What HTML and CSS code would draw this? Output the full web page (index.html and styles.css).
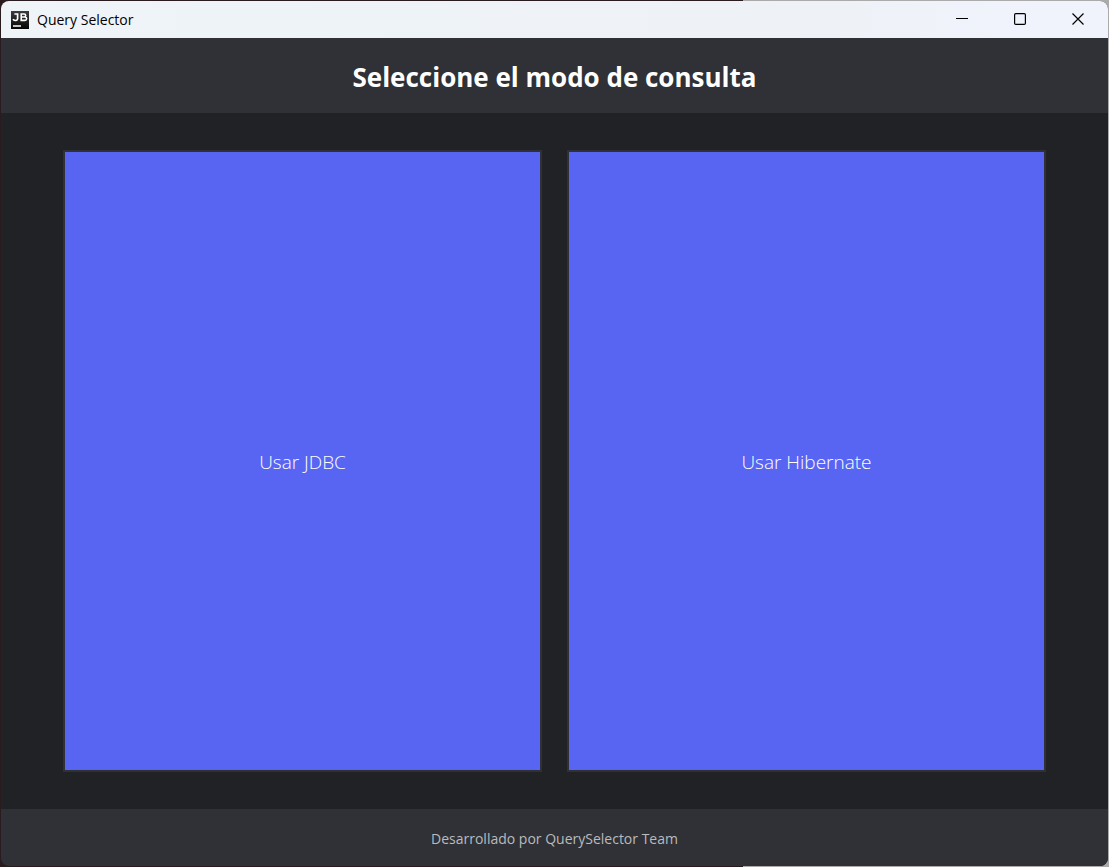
FILE: index.html
```html
<!DOCTYPE html>
<html lang="es">
<head>
<meta charset="utf-8">
<title>Query Selector</title>
<link rel="stylesheet" href="styles.css">
</head>
<body>
<div class="desktop">
  <div class="window">
    <div class="titlebar">
      <svg class="app-icon" viewBox="0 0 18 18" aria-hidden="true">
        <defs><linearGradient id="g" x1="0" y1="0" x2="0" y2="1"><stop offset="0" stop-color="#3c3c3e"/><stop offset="1" stop-color="#050505"/></linearGradient></defs>
        <rect width="18" height="18" fill="url(#g)"/>
        <path d="M3.4 3H7M6.6 2.2V7.6a1.8 1.8 0 0 1-1.9 1.9Q3 9.5 2 8.2" fill="none" stroke="#fff" stroke-width="1.7"/>
        <path d="M10.2 2.2V10.2M9.8 3h3.4a1.5 1.5 0 0 1 0 3H10M13.2 6h.7a1.7 1.7 0 0 1 0 3.4H9.8" fill="none" stroke="#fff" stroke-width="1.6"/>
        <path d="M2 15h8" stroke="#fff" stroke-width="1.4"/>
      </svg>
      <span class="caption">Query Selector</span>
      <div class="controls">
        <button class="control" type="button" aria-label="Minimizar"><svg viewBox="0 0 12 12"><path d="M0 5.5h12"/></svg></button>
        <button class="control" type="button" aria-label="Maximizar"><svg viewBox="0 0 12 12"><rect x=".6" y=".6" width="10.8" height="10.8" rx="1.2"/></svg></button>
        <button class="control" type="button" aria-label="Cerrar"><svg viewBox="0 0 12 12"><path d="M.5 .5l11 11M11.5 .5l-11 11"/></svg></button>
      </div>
    </div>
    <header class="header"><h1 class="heading">Seleccione el modo de consulta</h1></header>
    <main class="modes">
      <button class="mode" type="button">Usar JDBC</button>
      <button class="mode" type="button">Usar Hibernate</button>
    </main>
    <footer class="footer">Desarrollado por QuerySelector Team</footer>
  </div>
</div>
</body>
</html>
```

FILE: styles.css
```css
* { box-sizing: border-box; }

body {
  margin: 0;
  font-family: "Open Sans", "Noto Sans", sans-serif;
}

.desktop {
  display: flex;
  min-height: 100vh;
  padding: 1px;
  background: linear-gradient(90deg, #2a1c1e 0 67%, #ababab 67%);
}

.window {
  flex: 1;
  display: flex;
  flex-direction: column;
  overflow: hidden;
  border-radius: 8px;
  background: #202225;
}

.titlebar {
  display: flex;
  align-items: center;
  height: 37px;
  padding-left: 10px;
  gap: 8px;
  background: linear-gradient(90deg, #eff4f9, #eef2f7 75%, #f0f3fb 90%);
  color: #000;
}

.app-icon {
  width: 18px;
  height: 18px;
}

.caption {
  font-size: 14px;
  line-height: 20px;
}

.controls {
  display: flex;
  align-self: stretch;
  margin-left: auto;
  padding: 0 1px 1px 0;
}

.control {
  display: flex;
  align-items: center;
  justify-content: center;
  width: 58px;
  padding: 0;
  border: 0;
  background: none;
}

.control svg {
  width: 12px;
  height: 12px;
  fill: none;
  stroke: #000;
  stroke-width: 1.2;
}

.header {
  display: flex;
  align-items: center;
  justify-content: center;
  height: 75px;
  padding-top: 2px;
  background: #2f3136;
}

.heading {
  margin: 0;
  color: #fff;
  font-size: 26px;
  font-weight: 700;
  line-height: 36px;
}

.modes {
  flex: 1;
  display: flex;
  gap: 25px;
  padding: 37px 62px;
}

.mode {
  flex: 1;
  padding: 2px 0 0;
  border: 2px solid #2f3136;
  background: #5865f2;
  color: #fff;
  font-family: inherit;
  font-size: 19px;
  font-weight: 300;
}

.footer {
  display: flex;
  align-items: center;
  justify-content: center;
  height: 57px;
  padding-top: 2px;
  background: #2f3136;
  color: #b9bbbe;
  font-size: 14px;
}
```
